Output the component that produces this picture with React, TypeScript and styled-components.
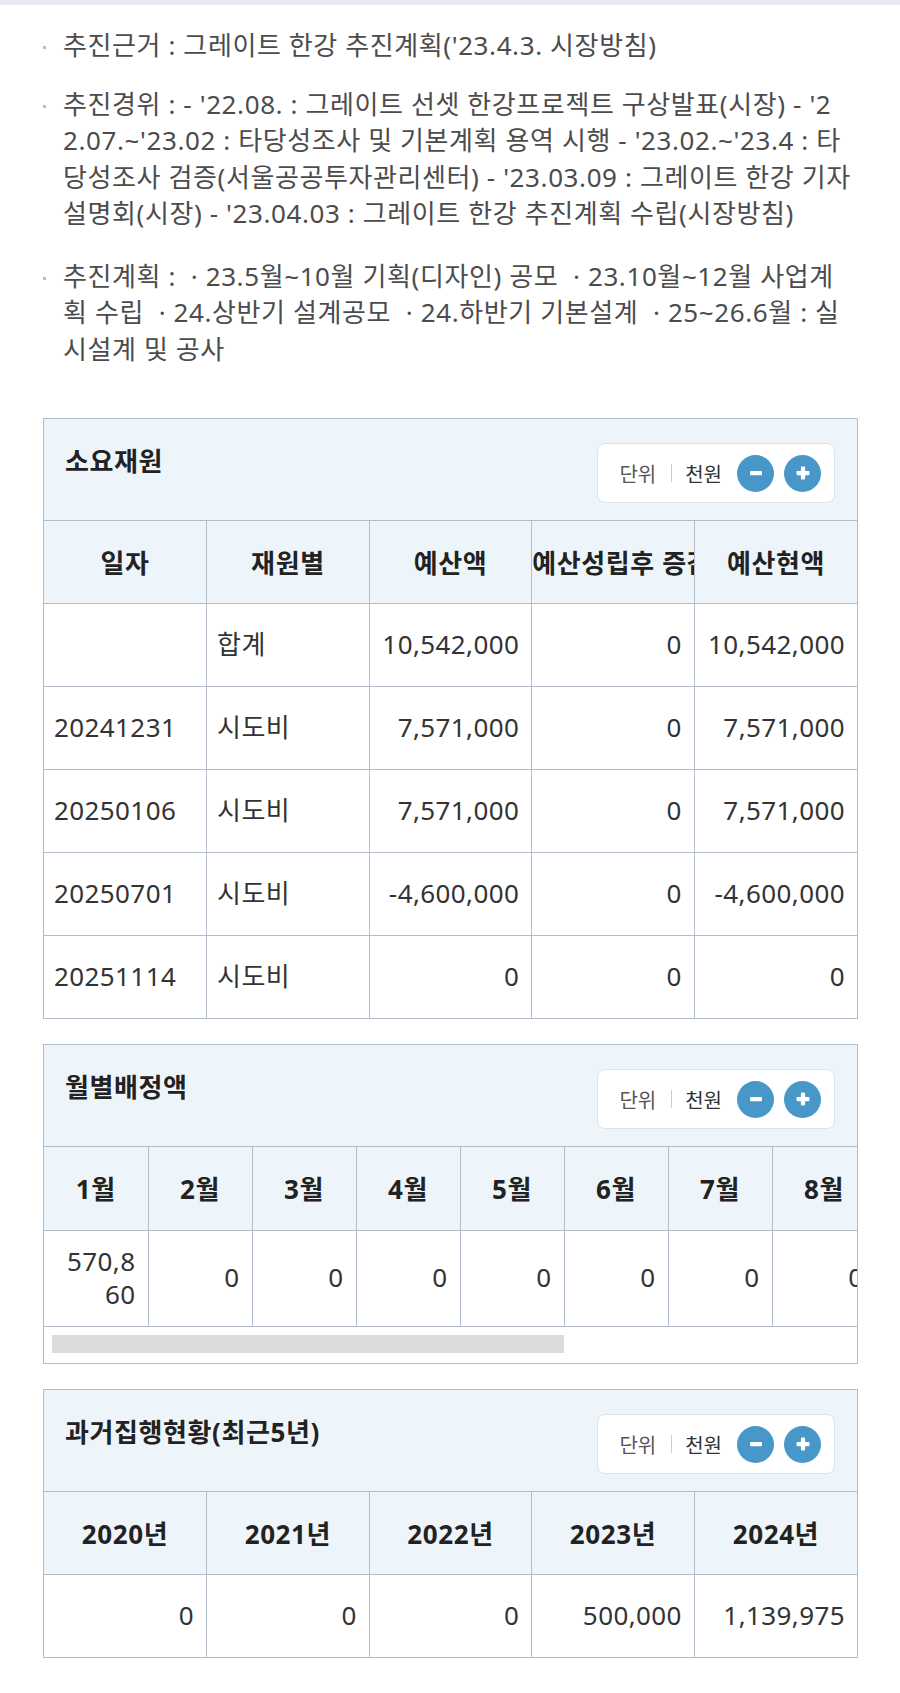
import React from "react";
import styled, { createGlobalStyle } from "styled-components";

const LINE = "#b3bccb";
const HEAD_BG = "#eef5fa";

const GlobalStyle = createGlobalStyle`
  html, body { margin: 0; padding: 0; background: #fff; }
  body {
    font-family: "Noto Sans", "Noto Sans CJK KR", sans-serif;
    color: #333;
  }
  * { box-sizing: border-box; }
`;

const Page = styled.div`
  border-top: 5px solid #e9e9ef;
  padding: 22px 42px 30px 43px;
`;

const InfoList = styled.ul`
  list-style: none;
  margin: 0 0 51px;
  padding: 0 5px 0 0;
  display: flex;
  flex-direction: column;
`;

const InfoItem = styled.li<{ $gap?: number }>`
  position: relative;
  margin-top: ${(p) => p.$gap ?? 0}px;
  padding-left: 20px;
  font-size: 26px;
  line-height: 36.5px;
  letter-spacing: 0.6px;
  color: #4c4c4c;
  word-break: break-all;
  &::before {
    content: "";
    position: absolute;
    left: 0;
    top: 19px;
    width: 3px;
    height: 3px;
    background: #b4bcc6;
  }
`;

const Section = styled.section`
  border: 1px solid ${LINE};
  & + & {
    margin-top: 25px;
  }
`;

const SectionHead = styled.div`
  display: flex;
  justify-content: space-between;
  align-items: flex-start;
  background: ${HEAD_BG};
  padding: 24px 22px 17px 21px;
  border-bottom: 1px solid ${LINE};
`;

const SectionTitle = styled.h3`
  margin: 0;
  font-size: 26px;
  font-weight: 700;
  line-height: 36px;
  letter-spacing: 0.6px;
  color: #222;
`;

const UnitBox = styled.div`
  display: flex;
  align-items: center;
  height: 60px;
  padding: 0 13px 0 21px;
  background: #fff;
  border: 1px solid #dde3ea;
  border-radius: 8px;
`;

const UnitLabel = styled.span`
  font-size: 20px;
  color: #555;
`;

const UnitDivider = styled.span`
  width: 1px;
  height: 18px;
  margin: 0 13px 0 15px;
  background: #c9ced6;
`;

const UnitValue = styled.span`
  font-size: 20px;
  color: #333;
  margin-right: 15px;
`;

const RoundBtn = styled.button`
  width: 37px;
  height: 37px;
  border-radius: 50%;
  border: 0;
  padding: 0;
  background: #4897c9;
  display: flex;
  align-items: center;
  justify-content: center;
  cursor: pointer;
  & + & {
    margin-left: 10px;
  }
`;

const Scroller = styled.div`
  overflow: hidden;
`;

const Table = styled.table<{ $colWidth?: number; $cols: number }>`
  border-collapse: collapse;
  table-layout: fixed;
  width: ${(p) => (p.$colWidth ? `${p.$colWidth * p.$cols}px` : "100%")};
`;

const Th = styled.th<{ $h?: number }>`
  height: ${(p) => p.$h ?? 82}px;
  padding: 0;
  background: ${HEAD_BG};
  font-size: 26px;
  font-weight: 700;
  letter-spacing: 0.6px;
  color: #222;
  text-align: center;
  white-space: nowrap;
  overflow: hidden;
  border-left: 1px solid ${LINE};
  border-bottom: 1px solid ${LINE};
  &:first-child {
    border-left: 0;
  }
`;

const Td = styled.td<{ $align?: "left" | "right"; $pad?: number }>`
  height: 83px;
  padding: ${(p) => p.$pad ?? 13}px 12px ${(p) => p.$pad ?? 13}px 10px;
  font-size: 26px;
  line-height: 1.3;
  letter-spacing: 0.4px;
  color: #333;
  text-align: ${(p) => p.$align ?? "right"};
  word-break: break-all;
  border-left: 1px solid ${LINE};
  border-bottom: 1px solid ${LINE};
  &:first-child {
    border-left: 0;
  }
  tr:last-child > & {
    border-bottom: 0;
  }
`;

const ScrollTrack = styled.div`
  height: 37px;
  padding: 8px 0 0 8px;
  border-top: 1px solid ${LINE};
  background: #fff;
`;

const ScrollThumb = styled.div`
  width: 512px;
  height: 18px;
  background: #dcdcdc;
`;

const MinusIcon = () => (
  <svg width="14" height="14" viewBox="0 0 14 14" aria-hidden="true">
    <rect x="1" y="5" width="12" height="4.2" rx="1" fill="#fff" />
  </svg>
);

const PlusIcon = () => (
  <svg width="14" height="14" viewBox="0 0 14 14" aria-hidden="true">
    <rect x="0.5" y="5" width="13" height="4.2" rx="1" fill="#fff" />
    <rect x="4.9" y="0.5" width="4.2" height="13" rx="1" fill="#fff" />
  </svg>
);

const Unit = () => (
  <UnitBox>
    <UnitLabel>단위</UnitLabel>
    <UnitDivider />
    <UnitValue>천원</UnitValue>
    <RoundBtn aria-label="축소">
      <MinusIcon />
    </RoundBtn>
    <RoundBtn aria-label="확대">
      <PlusIcon />
    </RoundBtn>
  </UnitBox>
);

const budgetRows = [
  { date: "", kind: "합계", budget: "10,542,000", change: "0", current: "10,542,000" },
  { date: "20241231", kind: "시도비", budget: "7,571,000", change: "0", current: "7,571,000" },
  { date: "20250106", kind: "시도비", budget: "7,571,000", change: "0", current: "7,571,000" },
  { date: "20250701", kind: "시도비", budget: "-4,600,000", change: "0", current: "-4,600,000" },
  { date: "20251114", kind: "시도비", budget: "0", change: "0", current: "0" },
];

const months = Array.from({ length: 12 }, (_, i) => `${i + 1}월`);
const monthValues = ["570,860", "0", "0", "0", "0", "0", "0", "0", "0", "0", "0", "0"];

const years = ["2020년", "2021년", "2022년", "2023년", "2024년"];
const yearValues = ["0", "0", "0", "500,000", "1,139,975"];

export default function App() {
  return (
    <>
      <GlobalStyle />
      <Page>
        <InfoList>
          <InfoItem>추진근거 : 그레이트 한강 추진계획('23.4.3. 시장방침)</InfoItem>
          <InfoItem $gap={22}>
            추진경위 : - '22.08. : 그레이트 선셋 한강프로젝트 구상발표(시장) - '22.07.~'23.02 : 타당성조사 및 기본계획 용역 시행 - '23.02.~'23.4 : 타당성조사 검증(서울공공투자관리센터) - '23.03.09 : 그레이트 한강 기자설명회(시장) - '23.04.03 : 그레이트 한강 추진계획 수립(시장방침)
          </InfoItem>
          <InfoItem $gap={26}>
            {"추진계획 : \u00a0· 23.5월~10월 기획(디자인) 공모 \u00a0· 23.10월~12월 사업계획 수립 \u00a0· 24.상반기 설계공모 \u00a0· 24.하반기 기본설계 \u00a0· 25~26.6월 : 실시설계 및 공사"}
          </InfoItem>
        </InfoList>

        <Section>
          <SectionHead>
            <SectionTitle>소요재원</SectionTitle>
            <Unit />
          </SectionHead>
          <Table $cols={5}>
            <thead>
              <tr>
                <Th>일자</Th>
                <Th>재원별</Th>
                <Th>예산액</Th>
                <Th>예산성립후 증감</Th>
                <Th>예산현액</Th>
              </tr>
            </thead>
            <tbody>
              {budgetRows.map((r, i) => (
                <tr key={i}>
                  <Td $align="left">{r.date}</Td>
                  <Td $align="left">{r.kind}</Td>
                  <Td>{r.budget}</Td>
                  <Td>{r.change}</Td>
                  <Td>{r.current}</Td>
                </tr>
              ))}
            </tbody>
          </Table>
        </Section>

        <Section>
          <SectionHead>
            <SectionTitle>월별배정액</SectionTitle>
            <Unit />
          </SectionHead>
          <Scroller>
            <Table $cols={12} $colWidth={104}>
              <thead>
                <tr>
                  {months.map((m) => (
                    <Th key={m} $h={83}>
                      {m}
                    </Th>
                  ))}
                </tr>
              </thead>
              <tbody>
                <tr>
                  {monthValues.map((v, i) => (
                    <Td key={i} $pad={14}>
                      {v}
                    </Td>
                  ))}
                </tr>
              </tbody>
            </Table>
          </Scroller>
          <ScrollTrack>
            <ScrollThumb />
          </ScrollTrack>
        </Section>

        <Section>
          <SectionHead>
            <SectionTitle>과거집행현황(최근5년)</SectionTitle>
            <Unit />
          </SectionHead>
          <Table $cols={5}>
            <thead>
              <tr>
                {years.map((y) => (
                  <Th key={y}>{y}</Th>
                ))}
              </tr>
            </thead>
            <tbody>
              <tr>
                {yearValues.map((v, i) => (
                  <Td key={i}>{v}</Td>
                ))}
              </tr>
            </tbody>
          </Table>
        </Section>
      </Page>
    </>
  );
}
